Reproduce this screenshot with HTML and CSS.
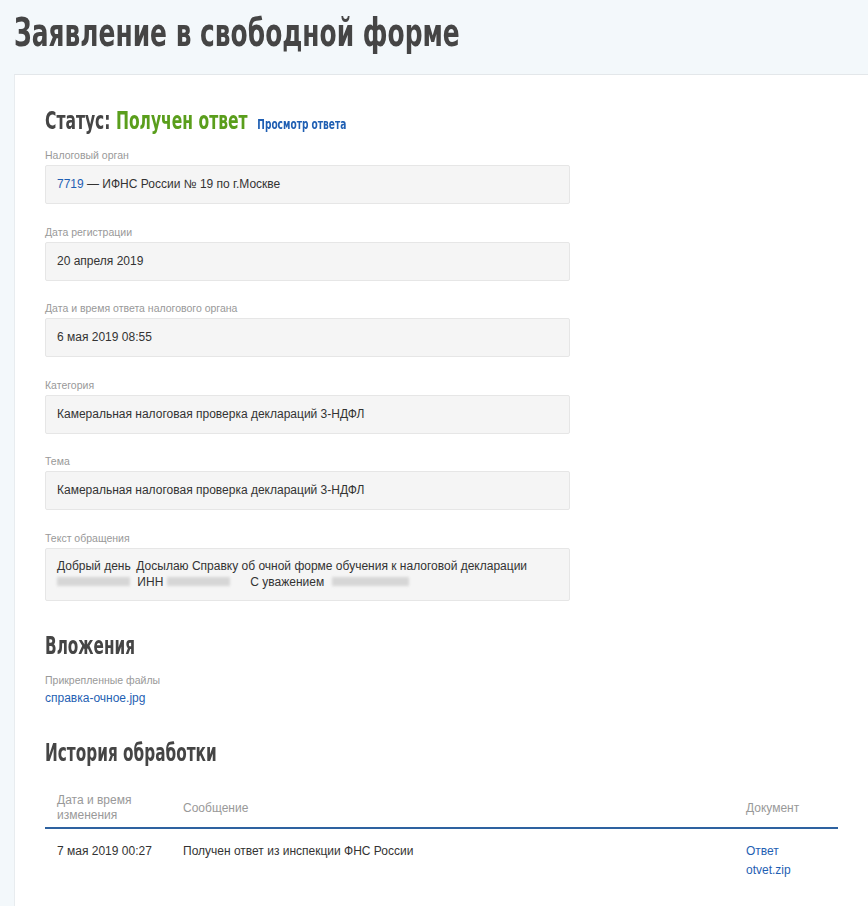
FILE: index.html
```html
<!DOCTYPE html>
<html lang="ru">
<head>
  <meta charset="UTF-8" />
  <title>Заявление в свободной форме</title>
  <link rel="stylesheet" href="styles.css">
</head>
<body>
  <h1 class="page-title">Заявление в свободной форме</h1>

  <div class="card">
    <div class="status">
      Статус: <span class="status-value">Получен ответ</span>
      <a href="#" class="status-link">Просмотр ответа</a>
    </div>

    <div class="field">
      <div class="field-label">Налоговый орган</div>
      <div class="field-box"><a href="#">7719</a> — ИФНС России № 19 по г.Москве</div>
    </div>

    <div class="field">
      <div class="field-label">Дата регистрации</div>
      <div class="field-box">20 апреля 2019</div>
    </div>

    <div class="field">
      <div class="field-label">Дата и время ответа налогового органа</div>
      <div class="field-box">6 мая 2019 08:55</div>
    </div>

    <div class="field">
      <div class="field-label">Категория</div>
      <div class="field-box">Камеральная налоговая проверка деклараций 3-НДФЛ</div>
    </div>

    <div class="field">
      <div class="field-label">Тема</div>
      <div class="field-box">Камеральная налоговая проверка деклараций 3-НДФЛ</div>
    </div>

    <div class="field">
      <div class="field-label">Текст обращения</div>
      <div class="field-box field-text">
        <span class="greeting">Добрый день</span> Досылаю Справку об очной форме обучения к налоговой декларации<br>
        <span class="blur blur-name"></span> ИНН<span class="blur blur-inn"></span>С уважением <span class="blur blur-sign"></span>
      </div>
    </div>

    <!-- ======= Вложения ======= -->
    <h2 class="section-title">Вложения</h2>
    <div class="field-label">Прикрепленные файлы</div>
    <a href="#" class="file-link">справка-очное.jpg</a>

    <!-- ======= История обработки ======= -->
    <h2 class="section-title history-title">История обработки</h2>
    <table class="history">
      <thead>
        <tr>
          <th class="col-date">Дата и время<br>изменения</th>
          <th>Сообщение</th>
          <th class="col-doc">Документ</th>
        </tr>
      </thead>
      <tbody>
        <tr>
          <td>7 мая 2019 00:27</td>
          <td>Получен ответ из инспекции ФНС России</td>
          <td><a href="#">Ответ</a><br><a href="#">otvet.zip</a></td>
        </tr>
      </tbody>
    </table>
  </div>
</body>
</html>
```

FILE: styles.css
```css
/* ======= Общие стили ======= */
body {
  margin: 0;
  padding: 0 0 0 14px;
  background: #f3f8fb;
  font-family: "Liberation Sans", Arial, sans-serif;
  font-size: 12px;
  color: #333;
  overflow-x: hidden;
}
a {
  color: #1f5fb3;
  text-decoration: none;
}

/* заголовки узким шрифтом: сжимаем DejaVu Condensed по горизонтали */
.page-title,
.status,
.section-title {
  font-family: "DejaVu Sans Condensed", sans-serif;
  font-weight: bold;
  color: #454545;
  transform-origin: 0 0;
  white-space: nowrap;
}

.page-title {
  margin: 0;
  padding: 10px 0 18px;
  font-size: 39px;
  line-height: 46px;
  transform: scaleX(0.71);
}

/* ======= Карточка ======= */
.card {
  background: #fff;
  border-top: 1px solid #e3e7ea;
  border-left: 1px solid #e8ecef;
  padding: 30px 30px 40px;
}

.status {
  font-size: 24px;
  line-height: 32px;
  transform: scaleX(0.72);
}
.status-value {
  color: #5a9e1c;
}
.status-link {
  margin-left: 6px;
  font-size: 14px;
  color: #1f5fb3;
}

/* ======= Поля ======= */
.field {
  max-width: 525px;
  margin-top: 8px;
}
.field + .field {
  margin-top: 20.5px;
}
.field-label {
  font-size: 10.5px;
  line-height: 14px;
  color: #999;
  margin-bottom: 3px;
}
.field-box {
  background: #f5f5f5;
  border: 1px solid #e6e6e6;
  border-radius: 2px;
  padding: 10px 11px 11px;
  line-height: 16px;
}
.field-text {
  padding: 9px 11px 10px;
  line-height: 16px;
}

.greeting {
  display: inline-block;
  width: 76px;
}
.blur {
  display: inline-block;
  height: 9px;
  vertical-align: 0;
  background: #cfcfcf;
  filter: blur(1.5px);
  opacity: 0.8;
}
.blur-name { width: 73px; margin-right: 4px; }
.blur-inn { width: 63px; margin: 0 20px 0 4px; }
.blur-sign { width: 77px; margin-left: 4px; }

/* ======= Разделы ======= */
.section-title {
  margin: 29px 0 11px;
  font-size: 25px;
  line-height: 32px;
  transform: scaleX(0.68);
}
.history-title {
  margin-top: 31.5px;
  margin-bottom: 18px;
}
.file-link {
  display: block;
  line-height: 16px;
}

/* ======= Таблица истории ======= */
.history {
  width: 100%;
  border-collapse: collapse;
}
.history th {
  text-align: left;
  font-weight: normal;
  font-size: 12px;
  line-height: 15px;
  color: #999;
  padding: 6px 12px 4px;
  border-bottom: 2px solid #2e62a0;
}
.history td {
  vertical-align: top;
  padding: 13px 12px;
  line-height: 19px;
}
.col-date {
  width: 102px;
}
.col-doc {
  width: 80px;
}
```
